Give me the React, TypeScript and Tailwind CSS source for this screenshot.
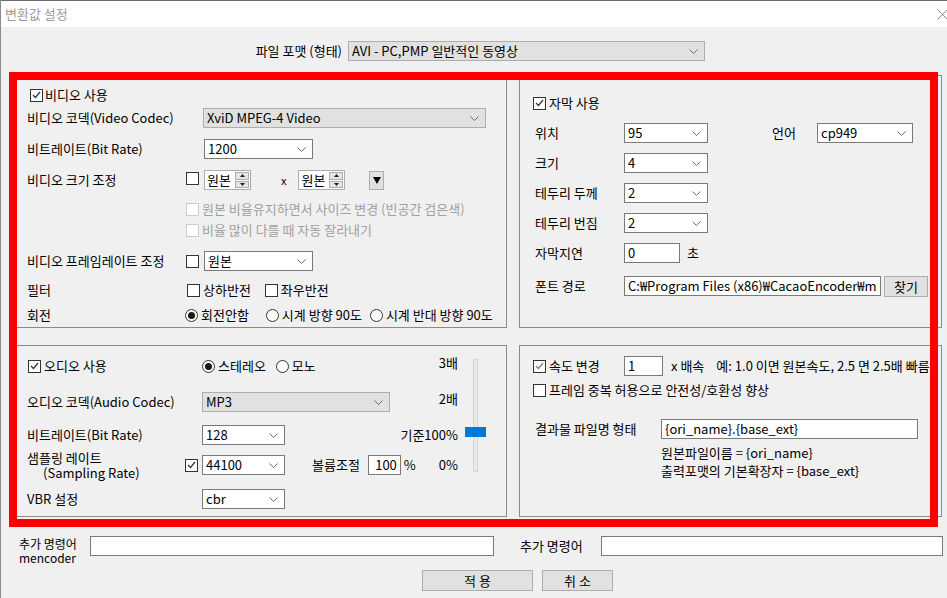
import React from "react";

// small win32-looking controls
function Box({ on, dim, soft }: { on?: boolean; dim?: boolean; soft?: boolean }) {
  return (
    <span
      className={`flex h-[13px] w-[13px] shrink-0 items-center justify-center border bg-white ${
        dim ? "border-[#cccccc]" : "border-[#333333]"
      }`}
    >
      {on && (
        <svg width="9" height="8" viewBox="0 0 9 8">
          <path d="M1 4 L3.5 6.5 L8 1" fill="none" stroke={soft ? "#7a7a7a" : "#333333"} strokeWidth="1.2" />
        </svg>
      )}
    </span>
  );
}

function Radio({ on }: { on?: boolean }) {
  return (
    <span className="flex h-[13px] w-[13px] shrink-0 items-center justify-center rounded-full border border-[#333333] bg-white">
      {on && <span className="h-[7px] w-[7px] rounded-full bg-[#1a1a1a]" />}
    </span>
  );
}

function Chev() {
  return (
    <svg width="9" height="5" viewBox="0 0 9 5" className="shrink-0">
      <path d="M0.5 0.5 L4.5 4.5 L8.5 0.5" fill="none" stroke="#6b6b6b" strokeWidth="1" />
    </svg>
  );
}

function Combo({ value, w, gray }: { value: string; w: string; gray?: boolean }) {
  return (
    <div
      className={`flex h-[20px] shrink-0 items-center justify-between border pl-[3px] pr-[6px] ${w} ${
        gray ? "border-[#adadad] bg-[#e1e1e1]" : "border-[#7a7a7a] bg-white"
      }`}
    >
      <span className="truncate leading-[18px]">{value}</span>
      <Chev />
    </div>
  );
}

function Field({ value, w, right }: { value?: string; w: string; right?: boolean }) {
  return (
    <div
      className={`flex h-[20px] shrink-0 items-center overflow-hidden border border-[#7a7a7a] bg-white px-[3px] ${w} ${
        right ? "justify-end" : ""
      }`}
    >
      <span className="min-w-0 overflow-hidden whitespace-nowrap leading-[18px]">{value}</span>
    </div>
  );
}

function Spin() {
  return (
    <div className="flex h-[20px] w-[47px] shrink-0 border border-[#abadb3] bg-white">
      <span className="flex flex-1 items-center pl-[2px] leading-[18px]">원본</span>
      <div className="flex w-[15px] flex-col gap-px py-px pr-px">
        <span className="flex flex-1 items-center justify-center border border-[#acacac] bg-[#e5e5e5]">
          <svg width="5" height="3" viewBox="0 0 5 3">
            <path d="M0 3 L2.5 0 L5 3Z" fill="#222" />
          </svg>
        </span>
        <span className="flex flex-1 items-center justify-center border border-[#acacac] bg-[#e5e5e5]">
          <svg width="5" height="3" viewBox="0 0 5 3">
            <path d="M0 0 L2.5 3 L5 0Z" fill="#222" />
          </svg>
        </span>
      </div>
    </div>
  );
}

function Btn({ children, w }: { children: React.ReactNode; w: string }) {
  return (
    <div className={`flex h-[21px] shrink-0 items-center justify-center border border-[#adadad] bg-[#e1e1e1] leading-[18px] ${w}`}>
      {children}
    </div>
  );
}

function VideoPanel() {
  return (
    <div className="flex flex-col border border-[#8a8a8a] pl-[14px]">
      <div className="mt-[9px] flex h-[20px] items-center">
        <span className="ml-[3px]">
          <Box on />
        </span>
        <span className="ml-[2px]">비디오 사용</span>
      </div>
      <div className="mt-[3px] flex h-[20px] items-center">
        <span className="w-[176px]">비디오 코덱(Video Codec)</span>
        <Combo value="XviD MPEG-4 Video" w="w-[283px]" gray />
      </div>
      <div className="mt-[11px] flex h-[20px] items-center">
        <span className="w-[177px]">비트레이트(Bit Rate)</span>
        <Combo value="1200" w="w-[109px]" />
      </div>
      <div className="mt-[11px] flex h-[20px] items-center">
        <span className="w-[159px]">비디오 크기 조정</span>
        <span className="-mt-[4px]">
          <Box />
        </span>
        <span className="ml-[5px]">
          <Spin />
        </span>
        <span className="ml-[30px] text-[11px]">x</span>
        <span className="ml-[12px]">
          <Spin />
        </span>
        <div className="ml-[24px] flex h-[19px] w-[15px] items-center justify-center border border-[#adadad] bg-[#e1e1e1]">
          <svg width="8" height="8" viewBox="0 0 8 8">
            <path d="M0 1 L8 1 L4 8Z" fill="#000" />
          </svg>
        </div>
      </div>
      <div className="mt-[9px] flex h-[20px] items-center pl-[159px] text-[#a0a0a0]">
        <Box dim />
        <span className="ml-[3px]">원본 비율유지하면서 사이즈 변경 (빈공간 검은색)</span>
      </div>
      <div className="mt-[1px] flex h-[20px] items-center pl-[159px] text-[#a0a0a0]">
        <Box dim />
        <span className="ml-[3px]">비율 많이 다를 때 자동 잘라내기</span>
      </div>
      <div className="mt-[11px] flex h-[20px] items-center">
        <span className="w-[159px]">비디오 프레임레이트 조정</span>
        <Box />
        <span className="ml-[5px]">
          <Combo value="원본" w="w-[109px]" />
        </span>
      </div>
      <div className="mt-[9px] flex h-[20px] items-center">
        <span className="w-[160px]">필터</span>
        <Box />
        <span className="ml-[3px]">상하반전</span>
        <span className="ml-[14px]">
          <Box />
        </span>
        <span className="ml-[3px]">좌우반전</span>
      </div>
      <div className="mt-[5px] flex h-[20px] items-center">
        <span className="w-[158px]">회전</span>
        <Radio on />
        <span className="ml-[3px]">회전안함</span>
        <span className="ml-[17px]">
          <Radio />
        </span>
        <span className="ml-[3px]">시계 방향 90도</span>
        <span className="ml-[8px]">
          <Radio />
        </span>
        <span className="ml-[3px]">시계 반대 방향 90도</span>
      </div>
    </div>
  );
}

function SubtitlePanel() {
  return (
    <div className="flex flex-col border border-[#8a8a8a] pl-[15px]">
      <div className="mt-[17px] flex h-[20px] items-center">
        <span className="-ml-[2px]">
          <Box on />
        </span>
        <span className="ml-[3px]">자막 사용</span>
      </div>
      <div className="mt-[10px] flex h-[20px] items-center">
        <span className="w-[89px]">위치</span>
        <Combo value="95" w="w-[84px]" />
        <span className="ml-[64px] w-[45px]">언어</span>
        <Combo value="cp949" w="w-[96px]" />
      </div>
      <div className="mt-[10px] flex h-[20px] items-center">
        <span className="w-[89px]">크기</span>
        <Combo value="4" w="w-[84px]" />
      </div>
      <div className="mt-[10px] flex h-[20px] items-center">
        <span className="w-[89px]">테두리 두께</span>
        <Combo value="2" w="w-[84px]" />
      </div>
      <div className="mt-[10px] flex h-[20px] items-center">
        <span className="w-[89px]">테두리 번짐</span>
        <Combo value="2" w="w-[84px]" />
      </div>
      <div className="mt-[10px] flex h-[20px] items-center">
        <span className="w-[89px]">자막지연</span>
        <Field value="0" w="w-[56px]" />
        <span className="ml-[7px]">초</span>
      </div>
      <div className="mt-[13px] flex h-[20px] items-center">
        <span className="w-[89px]">폰트 경로</span>
        <Field value="C:₩Program Files (x86)₩CacaoEncoder₩m" w="w-[257px]" />
        <span className="ml-[3px] self-start">
          <Btn w="w-[44px]">찾기</Btn>
        </span>
      </div>
    </div>
  );
}

function AudioPanel() {
  return (
    <div className="flex border border-[#8a8a8a] pl-[14px]">
      <div className="flex w-[431px] flex-col">
        <div className="mt-[10px] flex h-[20px] items-center">
          <div className="flex w-[175px] items-center">
            <span className="ml-[1px]">
              <Box on />
            </span>
            <span className="ml-[3px]">오디오 사용</span>
          </div>
          <Radio on />
          <span className="ml-[3px]">스테레오</span>
          <span className="ml-[10px]">
            <Radio />
          </span>
          <span className="ml-[3px]">모노</span>
          <span className="ml-auto -mt-[6px]">3배</span>
        </div>
        <div className="mt-[16px] flex h-[20px] items-center">
          <span className="w-[175px]">오디오 코덱(Audio Codec)</span>
          <Combo value="MP3" w="w-[188px]" gray />
          <span className="ml-auto -mt-[6px]">2배</span>
        </div>
        <div className="mt-[13px] flex h-[20px] items-center">
          <span className="w-[175px]">비트레이트(Bit Rate)</span>
          <Combo value="128" w="w-[83px]" />
          <span className="ml-auto">기준100%</span>
        </div>
        <div className="mt-[10px] flex h-[20px] items-center">
          <div className="flex w-[158px] flex-col leading-[15px]">
            <span>샘플링 레이트</span>
            <span className="pl-[16px]">(Sampling Rate)</span>
          </div>
          <Box on />
          <span className="ml-[4px]">
            <Combo value="44100" w="w-[83px]" />
          </span>
          <span className="ml-[27px]">볼륨조절</span>
          <span className="ml-[8px]">
            <Field value="100" w="w-[33px]" right />
          </span>
          <span className="ml-[3px]">%</span>
          <span className="ml-auto">0%</span>
        </div>
        <div className="mt-[14px] flex h-[20px] items-center">
          <span className="w-[175px]">VBR 설정</span>
          <Combo value="cbr" w="w-[83px]" />
        </div>
      </div>
      {/* volume slider */}
      <div className="relative ml-[7px] mt-[13px] h-[113px] w-[21px]">
        <div className="mx-auto h-full w-[5px] border border-[#d6d6d6] bg-[#e7eaea]" />
        <div className="absolute left-0 top-[68px] h-[10px] w-[21px] bg-[#0078d7]" />
      </div>
    </div>
  );
}

function SpeedPanel() {
  return (
    <div className="flex flex-col overflow-hidden border border-[#8a8a8a] pl-[13px]">
      <div className="mt-[10px] flex h-[20px] items-center whitespace-nowrap">
        <Box on soft />
        <span className="ml-[3px] w-[75px]">속도 변경</span>
        <Field value="1" w="w-[39px]" />
        <span className="ml-[8px]">x 배속</span>
        <span className="ml-[12px]">예: 1.0 이면 원본속도, 2.5 면 2.5배 빠름</span>
      </div>
      <div className="mt-[4px] flex h-[20px] items-center">
        <Box />
        <span className="ml-[3px]">프레임 중복 허용으로 안전성/호환성 향상</span>
      </div>
      <div className="mt-[19px] flex h-[20px] items-center">
        <span className="ml-[2px] w-[126px]">결과물 파일명 형태</span>
        <Field value="{ori_name}.{base_ext}" w="w-[257px]" />
      </div>
      <div className="mt-[5px] flex flex-col pl-[128px] leading-[18px]">
        <span>원본파일이름 = {"{ori_name}"}</span>
        <span>출력포맷의 기본확장자 = {"{base_ext}"}</span>
      </div>
    </div>
  );
}

export default function App() {
  return (
    <div className="relative h-[598px] w-[947px] overflow-hidden border-l border-[#8c8c8c] bg-[#f0f0f0] font-['Noto_Sans_CJK_KR',sans-serif] text-[13px] text-black">
      {/* title bar */}
      <div className="flex h-[27px] items-center justify-between border-t border-[#6d6d6d] bg-white pl-[4px]">
        <span className="text-[13px] text-[#9a9a9a]">변환값 설정</span>
        <svg width="11" height="11" viewBox="0 0 11 11" className="-mr-[1px]">
          <path d="M0.5 0.5 L10.5 10.5 M10.5 0.5 L0.5 10.5" stroke="#8a8a8a" strokeWidth="1" />
        </svg>
      </div>

      {/* output format */}
      <div className="mt-[14px] flex h-[20px] items-center">
        <span className="flex w-[347px] justify-end pr-[6px]">파일 포맷 (형태)</span>
        <Combo value="AVI - PC,PMP 일반적인 동영상" w="w-[357px]" gray />
      </div>

      <div className="mt-[14px] grid grid-cols-[495px_423px] grid-rows-[253px_172px] gap-x-[12px] gap-y-[17px] pl-[11px]">
        <VideoPanel />
        <SubtitlePanel />
        <AudioPanel />
        <SpeedPanel />
      </div>

      {/* extra options */}
      <div className="mt-[19px] flex h-[20px] items-start pl-[18px]">
        <div className="flex w-[71px] flex-col pt-[1px] text-[12px] leading-[14px]">
          <span>추가 명령어</span>
          <span>mencoder</span>
        </div>
        <Field w="w-[404px]" />
        <span className="ml-[26px] flex h-[20px] w-[81px] items-center">추가 명령어</span>
        <Field w="w-[342px]" />
      </div>

      <div className="mt-[14px] flex pl-[421px]">
        <Btn w="w-[111px]">적 용</Btn>
        <span className="ml-[9px]">
          <Btn w="w-[71px]">취 소</Btn>
        </span>
      </div>

      {/* red highlight drawn over the dialog */}
      <div className="pointer-events-none absolute left-[8px] top-[72px] h-[455px] w-[929px] border-[8px] border-[#ff0000]" />
    </div>
  );
}
